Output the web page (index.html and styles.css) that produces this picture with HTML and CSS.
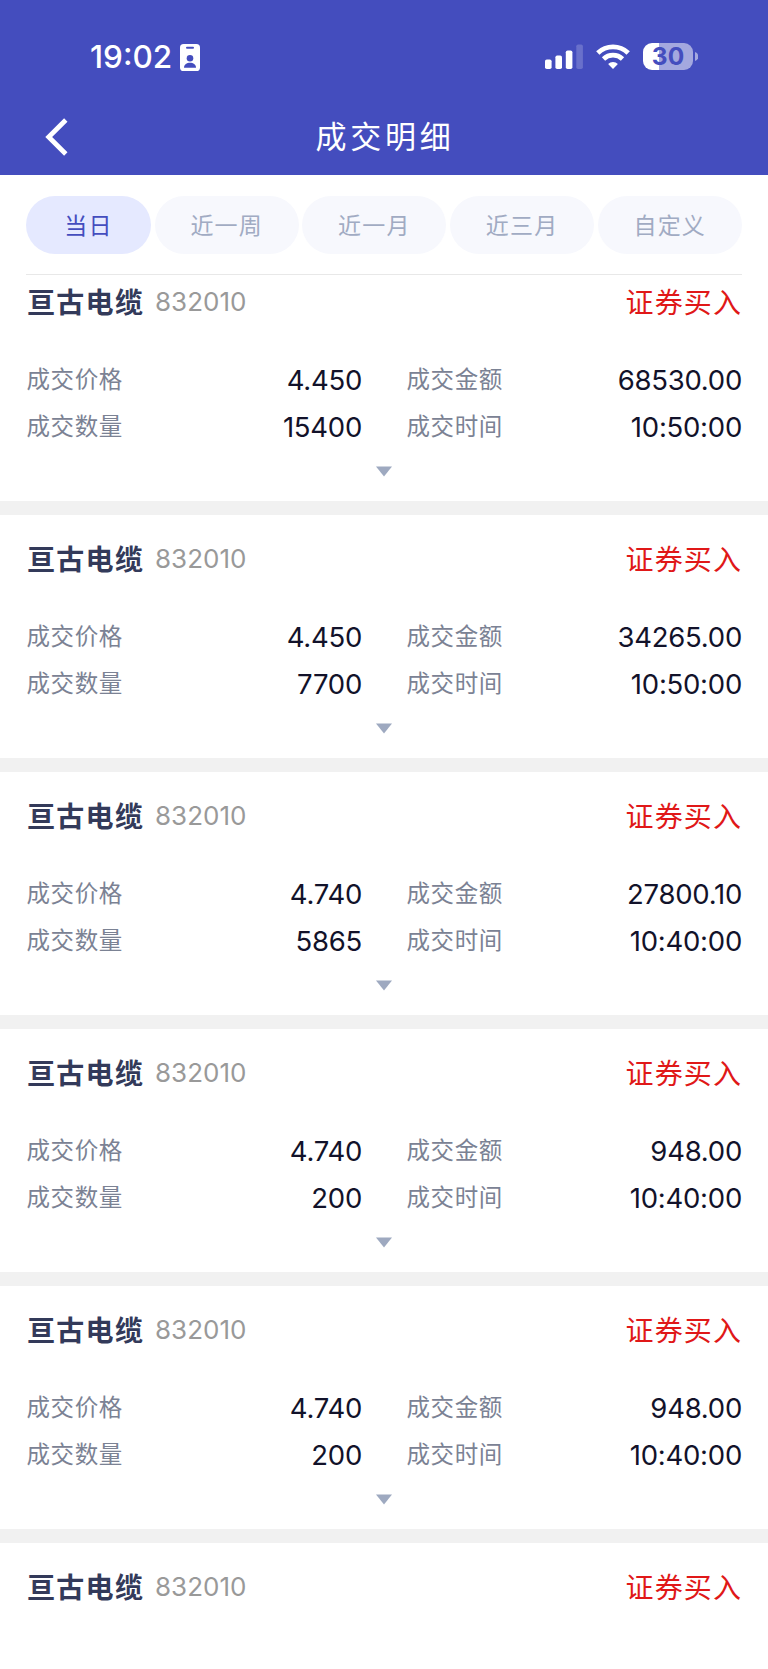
FILE: index.html
```html
<!DOCTYPE html>
<html lang="zh-CN">
<head>
<meta charset="utf-8">
<title>成交明细</title>
<link rel="stylesheet" href="styles.css">
</head>
<body>
<header class="header">
  <div class="status">
    <div class="status-left">
      <span class="clock">19:02</span>
      <svg class="badge" width="20" height="27" viewBox="0 0 20 27">
        <rect width="20" height="27" rx="3.6" fill="#fff"/>
        <rect x="6" y="2.8" width="8" height="2" rx="1" fill="#444dbe"/>
        <circle cx="10" cy="14.2" r="3.3" fill="#444dbe"/>
        <path d="M4 23.7c0-3.2 2.8-5 6-5s6 1.800 6 5z" fill="#444dbe"/>
      </svg>
    </div>
    <div class="status-right">
      <svg width="39" height="26" viewBox="0 0 39 26" fill="#fff">
        <rect x="0" y="15.500" width="6.600" height="9.500" rx="1.800"/>
        <rect x="10.400" y="11.500" width="6.600" height="13.500" rx="1.800"/>
        <rect x="20.800" y="6.500" width="6.600" height="18.500" rx="1.800"/>
        <rect x="31.300" y="0.500" width="6.600" height="24.500" rx="1.800" opacity=".2"/>
      </svg>
      <svg class="wifi" width="34" height="26" viewBox="0 0 34 26" fill="none" stroke="#fff" stroke-width="4.800">
        <path d="M1.800 8.900a22 22 0 0 1 30.400 0"/>
        <path d="M7.500 14.900a14 14 0 0 1 19 0"/>
        <path d="M17 24.900l-4.900-5a7.200 7.200 0 0 1 9.800 0z" fill="#fff" stroke="none"/>
      </svg>
      <div class="battery"><span>30</span></div>
      <svg class="battery-cap" width="3" height="9" viewBox="0 0 3 9"><path d="M0 0a4.700 4.700 0 0 1 0 9z" fill="#a4a8df"/></svg>
    </div>
  </div>
  <nav class="navbar">
    <svg class="back" width="24" height="38" viewBox="0 0 24 38" fill="none" stroke="#fff" stroke-width="4.800"><path d="M20.800 2L3.700 19l17.100 17"/></svg>
    <h1>成交明细</h1>
  </nav>
</header>
<div class="filters">
  <button class="tab tab-active">当日</button>
  <button class="tab">近一周</button>
  <button class="tab">近一月</button>
  <button class="tab">近三月</button>
  <button class="tab">自定义</button>
</div>
<main class="list" id="list"></main>
<script src="app.js"></script>
</body>
</html>
```
FILE: styles.css
```css
* { box-sizing: border-box; }
body {
  margin: 0;
  width: 768px;
  background: #fff;
  font-family: Inter, "Noto Sans CJK SC", sans-serif;
}
.header { height: 175px; background: #444dbe; color: #fff; }
.status {
  height: 100px;
  padding: 13px 70px 0 90px;
  display: flex;
  align-items: center;
  justify-content: space-between;
}
.status-left, .status-right { display: flex; align-items: center; }
.clock { font-size: 31.500px; font-weight: 550; line-height: 36px; width: 90px; white-space: nowrap; }
.badge { position: relative; top: 1px; }
.wifi { margin: 0 13px 0 12px; }
.battery {
  width: 50px;
  height: 27px;
  border-radius: 9px;
  background: linear-gradient(to right, #fff 16px, #a4a8df 16px);
  color: #444dbe;
  font-size: 24.500px;
  font-weight: 650;
  line-height: 27px;
  text-align: center;
}
.battery-cap { margin-left: 2px; }
.navbar { height: 73px; display: flex; align-items: center; padding: 0 45px; }
.navbar h1 {
  flex: 1;
  margin: 0 22px 0 0;
  text-align: center;
  font-size: 31px;
  font-weight: 400;
  letter-spacing: 3.800px;
  line-height: 40px;
}
.filters {
  height: 100px;
  margin: 0 26px;
  padding-top: 21px;
  border-bottom: 1px solid #e8e8e8;
  display: flex;
  gap: 3.700px;
}
.tab {
  width: 144px;
  height: 58px;
  padding: 0 0 2px;
  border: 0;
  border-radius: 29px;
  background: #f7f8fd;
  color: #a1abc3;
  font-family: inherit;
  font-size: 23px;
  letter-spacing: 1.200px;
}
.tab-active { width: 125px; background: #e5e9ff; color: #444dbe; }
.card { height: 257px; padding: 22px 26px 0; border-bottom: 14px solid #f1f1f1; }
.card:first-child { height: 240px; padding-top: 5px; }
.card:last-child { height: 126px; border-bottom: 0; }
.card-head { display: flex; align-items: center; height: 42px; }
.name { font-size: 28px; font-weight: 600; letter-spacing: 1.300px; color: #333a5a; width: 129px; padding-left: 1px; white-space: nowrap; }
.code { font-size: 26px; color: #999; flex: 1; padding-top: 1px; }
.side { font-size: 28px; letter-spacing: 1.100px; color: #e01818; }
.grid {
  display: grid;
  grid-template-columns: 336px 336px;
  column-gap: 44px;
  grid-auto-rows: 46.500px;
  margin-top: 33px;
}
.field { display: flex; justify-content: space-between; align-items: center; }
.label { font-size: 23.500px; letter-spacing: 0.600px; color: #7b8294; padding-left: 0.500px; }
.value { font-size: 27.500px; letter-spacing: -0.250px; color: #12122a; padding-top: 4px; }
.arrow { display: block; margin: 18px auto 0; }
```
FILE: app.js
```js
const trades = [
  ["4.450", "68530.00", "15400", "10:50:00"],
  ["4.450", "34265.00", "7700", "10:50:00"],
  ["4.740", "27800.10", "5865", "10:40:00"],
  ["4.740", "948.00", "200", "10:40:00"],
  ["4.740", "948.00", "200", "10:40:00"],
  null
];
const labels = ["成交价格", "成交金额", "成交数量", "成交时间"];

document.getElementById("list").innerHTML = trades.map(values => `
  <section class="card">
    <div class="card-head">
      <span class="name">亘古电缆</span>
      <span class="code">832010</span>
      <span class="side">证券买入</span>
    </div>
    ${values ? `<div class="grid">${values.map((value, i) => `
      <div class="field"><span class="label">${labels[i]}</span><span class="value">${value}</span></div>`).join("")}
    </div>
    <svg class="arrow" width="16" height="11" viewBox="0 0 16 11"><path d="M0 .5h16L8 10.500z" fill="#9ea9c0"/></svg>` : ""}
  </section>`).join("");
```
